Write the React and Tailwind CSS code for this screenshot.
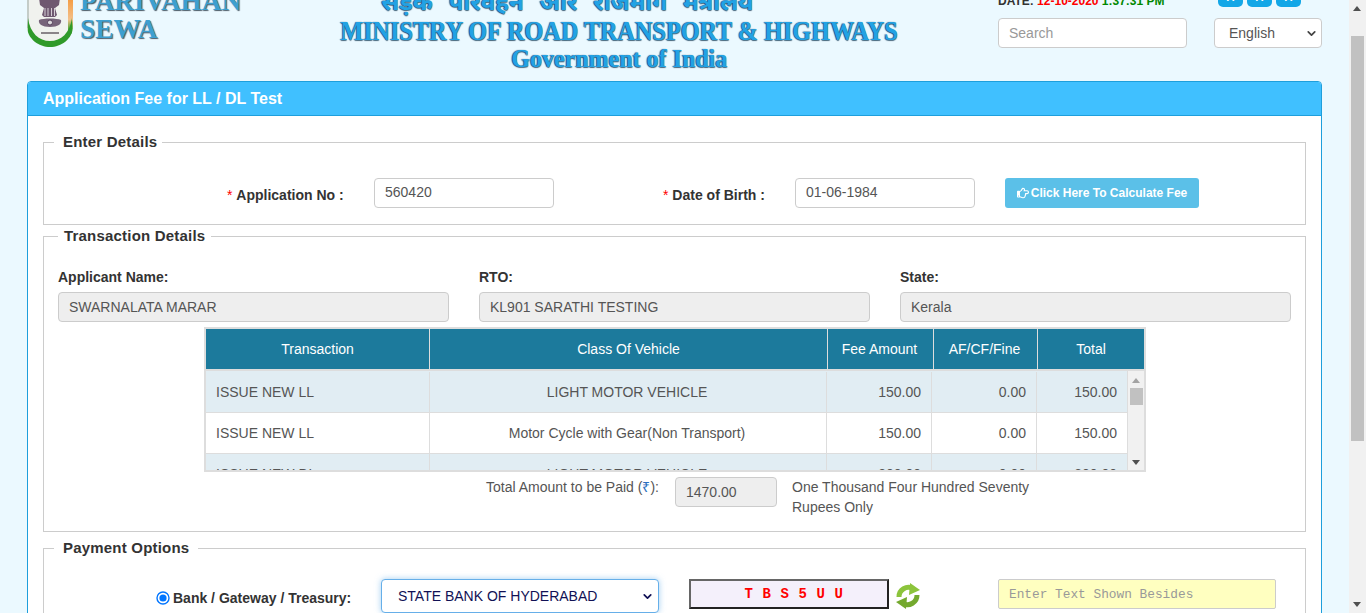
import React from "react";
import { FaRegHandPointRight } from "react-icons/fa";
import { ChevronDown } from "lucide-react";

const rows = [
  ["ISSUE NEW LL", "LIGHT MOTOR VEHICLE", "150.00", "0.00", "150.00", "bg-[#e1edf3] pt-[1px]", "h-[42px]"],
  ["ISSUE NEW LL", "Motor Cycle with Gear(Non Transport)", "150.00", "0.00", "150.00", "bg-white", "h-[41px]"],
  ["ISSUE NEW DL", "LIGHT MOTOR VEHICLE", "300.00", "0.00", "300.00", "bg-[#e1edf3]", "h-[41px]"],
];

const logoShadow = { textShadow: "1px 1px 1px #4a5a66" };
const titleShadow = { textShadow: "-1px 0 1px #1d4a66, 0 1px 1px #4a6a80" };

function Field({ label, value }) {
  return (
    <div>
      <div className="h-[20px] text-[14px] leading-[20px] font-bold text-[#333]">{label}</div>
      <div className="mt-[5px] h-[30px] rounded-[4px] border border-[#ccc] bg-[#eee] px-[10px] text-[14px] leading-[28px] text-[#555]">{value}</div>
    </div>
  );
}

function TextBox({ value, className }) {
  return (
    <div className={"h-[30px] rounded-[4px] border border-[#ccc] bg-white px-[10px] text-[14px] leading-[26px] text-[#555] " + className}>{value}</div>
  );
}

function Emblem() {
  return (
    <svg width="46" height="48" viewBox="0 0 46 48" className="shrink-0">
      <defs>
        <clipPath id="shield"><path d="M0 -2H46V26C46 39 34 47 23 47C12 47 0 39 0 26Z" /></clipPath>
        <linearGradient id="edge" x1="0" y1="0" x2="0" y2="1">
          <stop offset="0" stopColor="#f59a3e" />
          <stop offset="0.6" stopColor="#f3c08a" />
          <stop offset="0.85" stopColor="#5aa83e" />
        </linearGradient>
      </defs>
      <g clipPath="url(#shield)">
        <rect y="-2" width="46" height="50" fill="#f0f2ee" />
        <rect x="41" y="-2" width="5" height="36" fill="url(#edge)" />
        <rect y="-2" width="2" height="30" fill="#c4ccc8" />
        <path d="M1 18C3 33 12 41 23 41C34 41 43 33 45 18V48H0Z" fill="#2f9a2a" />
        <path d="M12 -2H33L32 5L28 8L30 15L28 17H17L15 15L17 8L13 5Z" fill="#6f5870" />
        <path d="M18 8L18 16M21 8L21 16M24.500 8L24.500 16M27.500 8L27.500 16" stroke="#d5ced5" strokeWidth="1" />
        <path d="M12 20C16 18 30 18 34 20C35 24 31 27 23 27C15 27 11 24 12 20Z" fill="#77647a" />
        <circle cx="23" cy="22.500" r="2.500" fill="#dcd8dc" stroke="#55405a" strokeWidth="1" />
        <rect x="14" y="32" width="18" height="2" fill="#8a8488" />
      </g>
    </svg>
  );
}

export default function App() {
  return (
    <div className="flex h-[613px] w-[1366px] overflow-hidden bg-[#ebf9ff] font-['Liberation_Sans',Arial,sans-serif]">
      <div className="w-[1349px] shrink-0 px-[27px]">
        <header className="flex h-[81px] overflow-hidden">
          <div className="flex w-[290px] shrink-0">
            <Emblem />
            <div className="ml-[7px] -mt-[13px] font-['Liberation_Serif',serif] text-[27.3px] leading-[28px] font-bold text-[#3d9fd0]" style={logoShadow}>
              <div>PARIVAHAN</div>
              <div>SEWA</div>
            </div>
          </div>
          <div className="ml-[22px] flex w-[560px] shrink-0 flex-col items-center font-['Liberation_Serif',serif] font-bold text-[#22a2e4]" style={titleShadow}>
            <div className="-mt-[14px] mr-[103px] h-[29px] whitespace-nowrap font-['Noto_Sans','DejaVu_Sans',sans-serif] text-[24px] leading-[29px] [word-spacing:9.5px]">सड़क परिवहन और राजमार्ग मंत्रालय</div>
            <div className="mt-[1px] scale-x-[0.913] text-[26.5px] leading-[30px] whitespace-nowrap">MINISTRY OF ROAD TRANSPORT &amp; HIGHWAYS</div>
            <div className="-mt-[2px] scale-x-[0.96] text-[25px] leading-[30px] whitespace-nowrap">Government of India</div>
          </div>
          <div className="ml-[99px] w-[324px] shrink-0">
            <div className="flex h-[18px]">
              <div className="-mt-[6px] w-[220px] text-[12px] leading-[14px] font-bold whitespace-nowrap text-[#333]">
                DATE: <span className="text-[#f00]">12-10-2020</span> <span className="text-[#080]">1:37:31 PM</span>
              </div>
              <div className="flex gap-[4px]">
                {["A", "A", "A"].map((a, i) => (
                  <div key={i} className="-mt-[4px] h-[11px] w-[25px] overflow-hidden rounded-[5px] bg-[#13a7e7] text-center text-[11px] leading-[2px] font-bold text-white">{a}</div>
                ))}
              </div>
            </div>
            <div className="flex">
              <div className="h-[30px] w-[189px] rounded-[4px] border border-[#ccc] bg-white pl-[10px] text-[14px] leading-[28px] text-[#999]">Search</div>
              <div className="ml-[27px] flex h-[30px] w-[108px] items-center justify-between rounded-[4px] border border-[#ccc] bg-white pr-[3px] pl-[14px] text-[14px] text-[#555]">
                <span>English</span>
                <ChevronDown size={13} strokeWidth={3.2} className="text-[#444]" />
              </div>
            </div>
          </div>
        </header>

        <main className="h-[600px] rounded-t-[4px] border border-[#1e9fdc] bg-white">
          <div className="h-[33px] rounded-t-[3px] bg-[#40c0ff] pl-[15px] text-[16px] leading-[33px] font-bold text-white">Application Fee for LL / DL Test</div>
          <div className="border-t border-[#1e9fdc] px-[15px]">
            <fieldset className="mt-[18px] h-[91px] border border-[#ccc] px-[10px]">
              <legend className="pr-[5px] pl-[9px] text-[15px] leading-[16px] font-bold tracking-[0.2px] text-[#333]">Enter Details</legend>
              <div className="mt-[28px] flex items-start">
                <div className="ml-[173px] w-[147px] pt-[7px] text-[14px] leading-[20px] font-bold text-[#333]"><span className="font-normal text-[#f00]">* </span>Application No :</div>
                <TextBox value="560420" className="w-[180px]" />
                <div className="ml-[109px] w-[132px] pt-[7px] text-[14px] leading-[20px] font-bold text-[#333]"><span className="font-normal text-[#f00]">* </span>Date of Birth :</div>
                <TextBox value="01-06-1984" className="w-[180px]" />
                <button className="ml-[30px] flex h-[30px] w-[194px] items-center justify-center gap-[2px] rounded-[3px] bg-[#5bc0e8] text-[12px] font-bold text-white">
                  <FaRegHandPointRight size={12} />Click Here To Calculate Fee
                </button>
              </div>
            </fieldset>

            <fieldset className="mt-[3px] h-[304px] border border-[#ccc] px-[14px]">
              <legend className="px-[6px] text-[15px] leading-[16px] font-bold tracking-[0.2px] text-[#333]">Transaction Details</legend>
              <div className="mt-[23px] grid grid-cols-3 gap-x-[30px]">
                <Field label="Applicant Name:" value="SWARNALATA MARAR" />
                <Field label="RTO:" value="KL901 SARATHI TESTING" />
                <Field label="State:" value="Kerala" />
              </div>

              <div className="ml-[146px] mt-[5px] h-[145px] w-[942px] overflow-hidden border-[2px] border-[#ddd] bg-white text-[14px] text-[#555]">
                <div className="flex h-[40px] bg-[#1c7a9c] text-center leading-[40px] text-white">
                  <div className="w-[224px] border-r border-[#ddd]">Transaction</div>
                  <div className="w-[398px] border-r border-[#ddd]">Class Of Vehicle</div>
                  <div className="w-[106px] border-r border-[#ddd] pr-[2px]">Fee Amount</div>
                  <div className="w-[104px] border-r border-[#ddd] pr-[2px]">AF/CF/Fine</div>
                  <div className="flex-1">Total</div>
                </div>
                <div className="h-[2px] bg-[#ddd]" />
                <div className="flex">
                  <div className="h-[101px] w-[921px] shrink-0 overflow-hidden">
                    {rows.map((r) => (
                      <div key={r[0] + r[1]} className={"flex border-b border-[#ddd] " + r[5] + " " + r[6]}>
                        <div className="flex w-[224px] items-center border-r border-[#ddd] pl-[10px]">{r[0]}</div>
                        <div className="flex w-[397px] items-center justify-center border-r border-[#ddd] pr-[2px]">{r[1]}</div>
                        <div className="flex w-[105px] items-center justify-end border-r border-[#ddd] pr-[10px]">{r[2]}</div>
                        <div className="flex w-[105px] items-center justify-end border-r border-[#ddd] pr-[10px]">{r[3]}</div>
                        <div className="flex flex-1 items-center justify-end pr-[10px]">{r[4]}</div>
                      </div>
                    ))}
                  </div>
                  <div className="relative h-[101px] flex-1 border-l border-[#ddd] bg-[#f1f1f1]">
                    <div className="absolute top-[7px] left-[4px] h-0 w-0 border-x-[4px] border-b-[5px] border-x-transparent border-b-[#a3a3a3]" />
                    <div className="absolute top-[17px] left-[2px] h-[17px] w-[13px] bg-[#c1c1c1]" />
                    <div className="absolute bottom-[7px] left-[4px] h-0 w-0 border-x-[4px] border-t-[5px] border-x-transparent border-t-[#505050]" />
                  </div>
                </div>
              </div>

              <div className="ml-[428px] flex items-start text-[14px] text-[#555]">
                <div className="mt-[5px] w-[189px] leading-[20px]">Total Amount to be Paid (<span className="text-[#2a6fc0]">₹</span>):</div>
                <div className="mt-[5px] h-[30px] w-[102px] rounded-[4px] border border-[#ccc] bg-[#eee] px-[10px] leading-[28px]">1470.00</div>
                <div className="ml-[15px] mt-[5px] w-[260px] leading-[20px]">One Thousand Four Hundred Seventy Rupees Only</div>
              </div>
            </fieldset>

            <fieldset className="mt-[8px] h-[120px] border border-[#ccc] px-[10px]">
              <legend className="px-[9px] text-[15px] leading-[16px] font-bold tracking-[0.2px] text-[#333]">Payment Options</legend>
              <div className="mt-[23px] flex items-start">
                <div className="ml-[102px] flex w-[225px] items-center pt-[9px] text-[14px] leading-[20px] font-bold text-[#333]">
                  <svg width="14" height="14" viewBox="0 0 14 14" className="mr-[3px]"><circle cx="7" cy="7" r="6" fill="white" stroke="#0075ff" strokeWidth="1.4" /><circle cx="7" cy="7" r="3.6" fill="#0075ff" /></svg>
                  Bank / Gateway / Treasury:
                </div>
                <div className="flex h-[34px] w-[278px] items-center justify-between rounded-[4px] border border-[#66afe9] bg-white pr-[4px] pl-[16px] text-[14px] text-[#111155] shadow-[0_0_6px_rgba(102,175,233,0.6)]">
                  <span>STATE BANK OF HYDERABAD</span>
                  <ChevronDown size={13} strokeWidth={3.2} className="text-[#111155]" />
                </div>
                <div className="ml-[30px] h-[30px] w-[200px] border-2 border-t-[#666] border-r-[#222] border-b-[#222] border-l-[#666] bg-[#f4f0fb] pl-[10px] text-center font-['Liberation_Mono',monospace] text-[14px] leading-[26px] font-bold tracking-[0.6px] text-[#f00]">T B S 5 U U</div>
                <svg width="26" height="26" viewBox="0 0 26 26" className="ml-[6px] mt-[4px]">
                  <path d="M4 14A9.5 9.5 0 0 1 18 5.500" fill="none" stroke="#8cc43c" strokeWidth="5" />
                  <path d="M15 0L25 7L14 12Z" fill="#8cc43c" />
                  <path d="M22 12A9.5 9.5 0 0 1 8 20.500" fill="none" stroke="#74a92e" strokeWidth="5" />
                  <path d="M11 26L1 19L12 14Z" fill="#74a92e" />
                </svg>
                <div className="ml-[77px] h-[30px] w-[278px] rounded-[2px] border border-[#ccc] bg-[#ffffc0] pl-[10px] font-['Liberation_Mono','DejaVu_Sans_Mono',monospace] text-[12.8px] leading-[29px] text-[#999]">Enter Text Shown Besides</div>
              </div>
            </fieldset>
          </div>
        </main>
      </div>

      <div className="relative w-[17px] shrink-0 bg-[#f1f1f1]">
        <div className="absolute top-[6px] left-[4px] h-0 w-0 border-x-[4px] border-b-[5px] border-x-transparent border-b-[#505050]" />
        <div className="absolute top-[36px] left-[2px] h-[405px] w-[13px] bg-[#c1c1c1]" />
        <div className="absolute bottom-[6px] left-[4px] h-0 w-0 border-x-[4px] border-t-[5px] border-x-transparent border-t-[#505050]" />
      </div>
    </div>
  );
}
